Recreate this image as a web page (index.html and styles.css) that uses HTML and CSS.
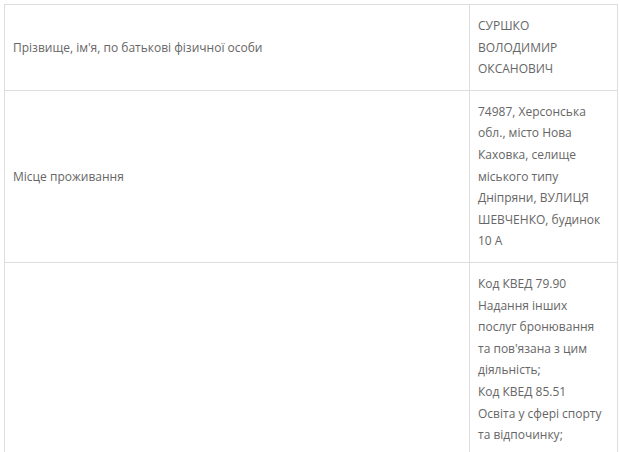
FILE: index.html
```html
<!DOCTYPE html>
<html lang="uk">
<head>
  <meta charset="UTF-8">
  <meta name="viewport" content="width=device-width, initial-scale=1.0">
  <title>Відомості про ФОП</title>
  <link rel="stylesheet" href="styles.css">
</head>
<body>

  <div class="page">
    <table class="info-table">
      <colgroup>
        <col class="col-label">
        <col class="col-value">
      </colgroup>
      <tr>
        <td class="label">Прізвище, ім'я, по батькові фізичної особи</td>
        <td class="value">СУРШКО ВОЛОДИМИР ОКСАНОВИЧ</td>
      </tr>
      <tr>
        <td class="label">Місце проживання</td>
        <td class="value">74987, Херсонська обл., місто Нова Каховка, селище міського типу Дніпряни, ВУЛИЦЯ ШЕВЧЕНКО, будинок 10 А</td>
      </tr>
      <tr>
        <td class="label"></td>
        <td class="value kved">
          Код КВЕД 79.90<br>Надання інших послуг бронювання та пов'язана з цим діяльність;<br>
          Код КВЕД 85.51<br>Освіта у сфері спорту та відпочинку;
        </td>
      </tr>
    </table>
  </div>

</body>
</html>
```

FILE: styles.css
```css
body, html {
  margin: 0;
  font-size: 12px;
  font-family: "Open Sans", sans-serif;
  font-weight: 400;
  line-height: 1.8em;
  color: #666;
  background: #fff;
  overflow: hidden;
}

.page {
  padding: 4px 0 0 4px;
}

.info-table {
  width: 613px;
  table-layout: fixed;
  border-collapse: collapse;
  border: 1px solid #ddd;
}

.col-label {
  width: 465px;
}

.col-value {
  width: 148px;
}

.info-table td {
  border: 1px solid #ddd;
  padding: 10px 8px;
}

.info-table .label {
  vertical-align: middle;
}

.info-table .value {
  vertical-align: top;
}

/* list of activity codes wraps a little narrower */
.info-table .kved {
  padding-right: 12px;
}
```
